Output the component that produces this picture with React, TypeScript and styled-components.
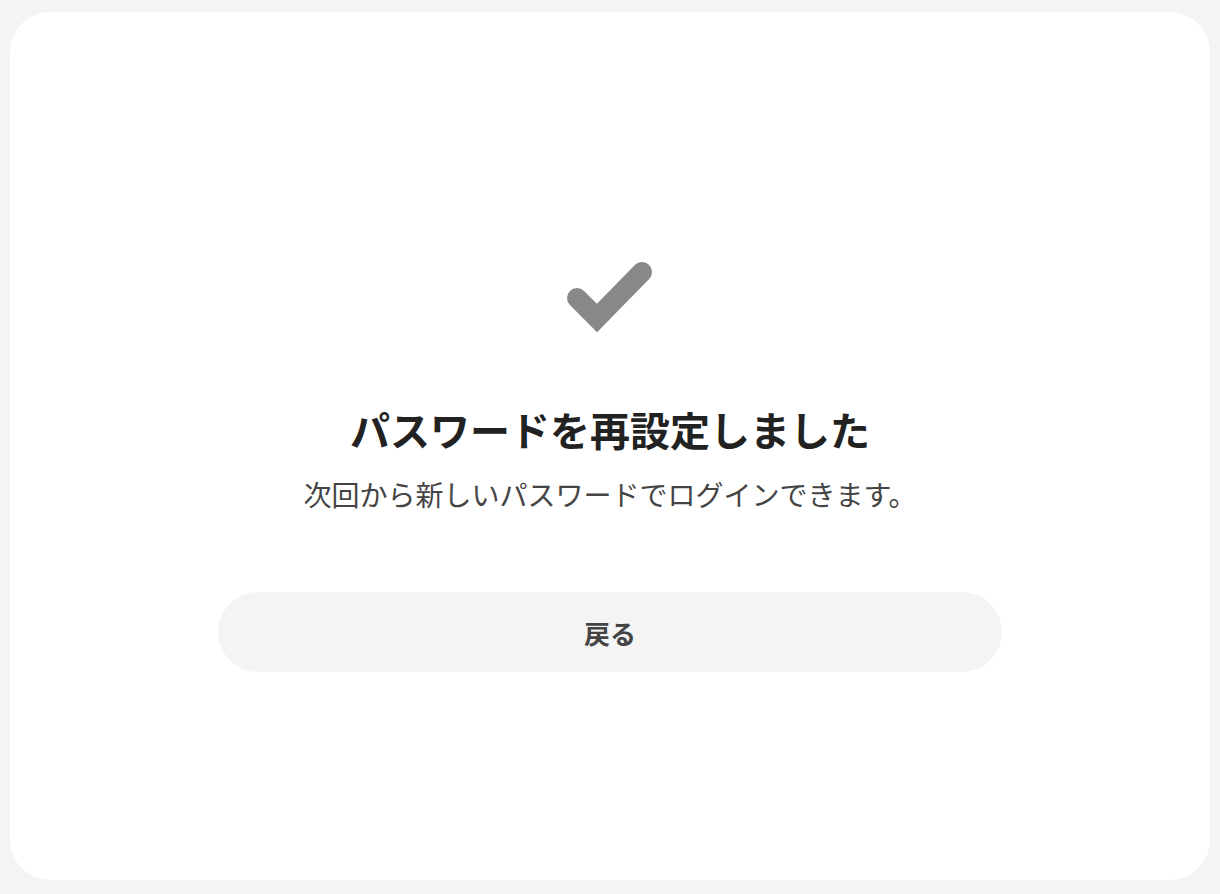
import React from "react";
import styled, { createGlobalStyle } from "styled-components";

const Global = createGlobalStyle`
  html, body {
    margin: 0;
    padding: 0;
    background: #f4f4f4;
  }
  body {
    font-family: "Noto Sans CJK JP", "Noto Sans", sans-serif;
  }
`;

const Page = styled.div`
  box-sizing: border-box;
  width: 1220px;
  height: 894px;
  padding: 12px 10px 14px;
  background: #f4f4f4;
`;

const Card = styled.main`
  box-sizing: border-box;
  height: 100%;
  background: #ffffff;
  border-radius: 40px;
  display: flex;
  flex-direction: column;
  align-items: center;
  padding-top: 249px;
`;

const CheckIcon = styled.svg`
  display: block;
  width: 86px;
  height: 72px;
  overflow: visible;
`;

const Title = styled.h1`
  margin: 68px 0 0;
  font-size: 40px;
  line-height: 56px;
  font-weight: 700;
  color: #222222;
  letter-spacing: 0;
`;

const Message = styled.p`
  margin: 17px 0 0;
  font-size: 28px;
  line-height: 40px;
  font-weight: 400;
  color: #444444;
`;

const BackButton = styled.button`
  margin-top: 78px;
  width: 784px;
  height: 80px;
  border: none;
  border-radius: 40px;
  background: #f4f4f4;
  color: #444444;
  font-family: inherit;
  font-size: 26px;
  font-weight: 700;
  cursor: pointer;
`;

export default function App() {
  return (
    <>
      <Global />
      <Page>
        <Card>
          <CheckIcon viewBox="0 0 86 72" aria-hidden="true">
            <path
              d="M10 37 L30 57 L75 11"
              fill="none"
              stroke="#888888"
              strokeWidth={20}
              strokeLinecap="round"
              strokeLinejoin="miter"
            />
          </CheckIcon>
          <Title>パスワードを再設定しました</Title>
          <Message>次回から新しいパスワードでログインできます。</Message>
          <BackButton type="button">戻る</BackButton>
        </Card>
      </Page>
    </>
  );
}
